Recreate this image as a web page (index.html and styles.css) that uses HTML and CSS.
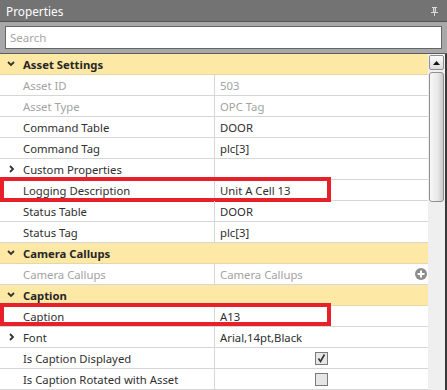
FILE: index.html
```html
<!DOCTYPE html>
<html lang="en">
<head>
  <meta charset="UTF-8">
  <title>Properties</title>
  <link rel="stylesheet" href="styles.css">
</head>
<body>
  <div class="panel">
    <div class="title-bar">
      <span>Properties</span>
      <svg class="pin" width="7" height="9" viewBox="0 0 7 9">
        <path d="M1 0h5v1h-1v4h2v1h-3v3h-1v-3h-3v-1h2v-4h-1z" fill="#d9d9d9"/>
        <path d="M3 1h1v4h-1z" fill="#9a9a9a"/>
      </svg>
    </div>

    <div class="search-bar">
      <input class="search" type="text" placeholder="Search">
    </div>

    <div class="grid-area">
      <div class="rows">
        <!-- Asset Settings -->
        <div class="group">
          <svg class="chev" width="8" height="6" viewBox="0 0 8 6"><path d="M1 1l3 3 3-3" fill="none" stroke="#333" stroke-width="1.8"/></svg>
          Asset Settings
        </div>
        <div class="row disabled"><div class="name">Asset ID</div><div class="value">503</div></div>
        <div class="row disabled"><div class="name">Asset Type</div><div class="value">OPC Tag</div></div>
        <div class="row"><div class="name">Command Table</div><div class="value">DOOR</div></div>
        <div class="row"><div class="name">Command Tag</div><div class="value">plc[3]</div></div>
        <div class="row">
          <div class="name">
            <svg class="chev-right" width="6" height="8" viewBox="0 0 6 8"><path d="M1 1l3 3-3 3" fill="none" stroke="#333" stroke-width="1.8"/></svg>
            Custom Properties
          </div>
          <div class="value"></div>
        </div>
        <div class="row">
          <div class="name">Logging Description</div><div class="value">Unit A Cell 13</div>
          <div class="mark mark-log"></div>
        </div>
        <div class="row"><div class="name">Status Table</div><div class="value">DOOR</div></div>
        <div class="row"><div class="name">Status Tag</div><div class="value">plc[3]</div></div>

        <!-- Camera Callups -->
        <div class="group">
          <svg class="chev" width="8" height="6" viewBox="0 0 8 6"><path d="M1 1l3 3 3-3" fill="none" stroke="#333" stroke-width="1.8"/></svg>
          Camera Callups
        </div>
        <div class="row disabled">
          <div class="name">Camera Callups</div>
          <div class="value split">
            <span>Camera Callups</span>
            <svg class="add" width="12" height="12" viewBox="0 0 12 12">
              <circle cx="6" cy="6" r="6" fill="#8c8c8c"/>
              <path d="M6 2.5v7M2.5 6h7" stroke="#fff" stroke-width="2"/>
            </svg>
          </div>
        </div>

        <!-- Caption -->
        <div class="group">
          <svg class="chev" width="8" height="6" viewBox="0 0 8 6"><path d="M1 1l3 3 3-3" fill="none" stroke="#333" stroke-width="1.8"/></svg>
          Caption
        </div>
        <div class="row">
          <div class="name">Caption</div><div class="value">A13</div>
          <div class="mark mark-caption"></div>
        </div>
        <div class="row">
          <div class="name">
            <svg class="chev-right" width="6" height="8" viewBox="0 0 6 8"><path d="M1 1l3 3-3 3" fill="none" stroke="#333" stroke-width="1.8"/></svg>
            Font
          </div>
          <div class="value">Arial,14pt,Black</div>
        </div>
        <div class="row">
          <div class="name">Is Caption Displayed</div>
          <div class="value center"><span class="check checked">
            <svg width="11" height="11" viewBox="0 0 11 11"><path d="M2.5 5.5l2 3 4-7" fill="none" stroke="#333" stroke-width="1.6"/></svg>
          </span></div>
        </div>
        <div class="row">
          <div class="name">Is Caption Rotated with Asset</div>
          <div class="value center"><span class="check"></span></div>
        </div>
      </div>

      <div class="scrollbar">
        <div class="scroll-up">
          <svg width="7" height="4" viewBox="0 0 7 4"><path d="M0 4L3.5 0 7 4z" fill="#111"/></svg>
        </div>
        <div class="thumb"></div>
      </div>
    </div>
  </div>
</body>
</html>
```

FILE: styles.css
```css
body {
  margin: 0;
  font-family: "Noto Sans", "Open Sans", sans-serif;
  font-size: 11.3px;
  color: #2f2f2f;
  overflow: hidden;
}

.panel {
  width: 447px;
  height: 390px;
  display: flex;
  flex-direction: column;
  background: #fff;
}

.title-bar {
  height: 22px;
  background: #737373;
  color: #fff;
  font-size: 11.8px;
  display: flex;
  align-items: center;
  justify-content: space-between;
  padding: 0 9px 0 6px;
  box-sizing: border-box;
  border-bottom: 1px solid #555;
}

.pin {
  margin-top: 1px;
}

.search-bar {
  height: 32px;
  background: #a8a8a8;
  padding: 4px 5px 0 5px;
  box-sizing: border-box;
  border-bottom: 1px solid #5c5c5c;
}

.search {
  display: block;
  width: 100%;
  height: 23px;
  box-sizing: border-box;
  border: 1px solid #666;
  padding: 0 4px;
  font-family: inherit;
  font-size: 11.5px;
  outline: none;
}

.search::placeholder {
  color: #a6a6a6;
}

.grid-area {
  flex: 1;
  display: flex;
  min-height: 0;
}

.rows {
  width: 428px;
}

.group {
  position: relative;
  height: 21px;
  background: #fee8a6;
  font-weight: bold;
  display: flex;
  align-items: center;
  padding-left: 7px;
  box-sizing: border-box;
  border-bottom: 1px solid #e6d7a8;
  color: #262626;
}

.chev {
  margin-right: 8px;
}

.row {
  position: relative;
  height: 21px;
  display: grid;
  grid-template-columns: 215px 1fr;
  box-sizing: border-box;
  border-bottom: 1px solid #d6d6d6;
}

.name {
  display: flex;
  align-items: center;
  padding-left: 23px;
  border-right: 1px solid #d6d6d6;
  white-space: nowrap;
}

.chev-right {
  margin-left: -14px;
  margin-right: 8px;
}

.value {
  display: flex;
  align-items: center;
  padding-left: 5px;
  white-space: nowrap;
}

.value.split {
  justify-content: space-between;
  padding-right: 1px;
}

.value.center {
  justify-content: center;
  padding-left: 0;
}

.disabled {
  color: #a3a3a3;
}

.check {
  width: 13px;
  height: 13px;
  box-sizing: border-box;
  border: 1px solid #7a7a7a;
  background: #e6e6e6;
  display: flex;
  align-items: center;
  justify-content: center;
}

/* red annotation frames */
.mark {
  position: absolute;
  left: 0;
  border: 4px solid #e8202a;
  box-sizing: border-box;
  width: 331px;
}

.mark-log {
  top: -3px;
  height: 25px;
}

.mark-caption {
  top: -3px;
  height: 23px;
}

.scrollbar {
  width: 19px;
  background: #efefef;
  border-right: 2px solid #3a3a3a;
  box-sizing: border-box;
  padding: 1px 1px 0 1px;
}

.scroll-up {
  height: 15px;
  border: 1px solid #8d8d8d;
  border-radius: 2px;
  background: linear-gradient(#fbfbfb, #dcdcdc);
  box-sizing: border-box;
  display: flex;
  align-items: center;
  justify-content: center;
}

.thumb {
  margin-top: 2px;
  height: 130px;
  border: 1px solid #8f8f8f;
  border-radius: 3px;
  box-sizing: border-box;
  background: linear-gradient(to right, #f7f7f7, #e8e8e8 60%, #c9c9c9);
}
```
